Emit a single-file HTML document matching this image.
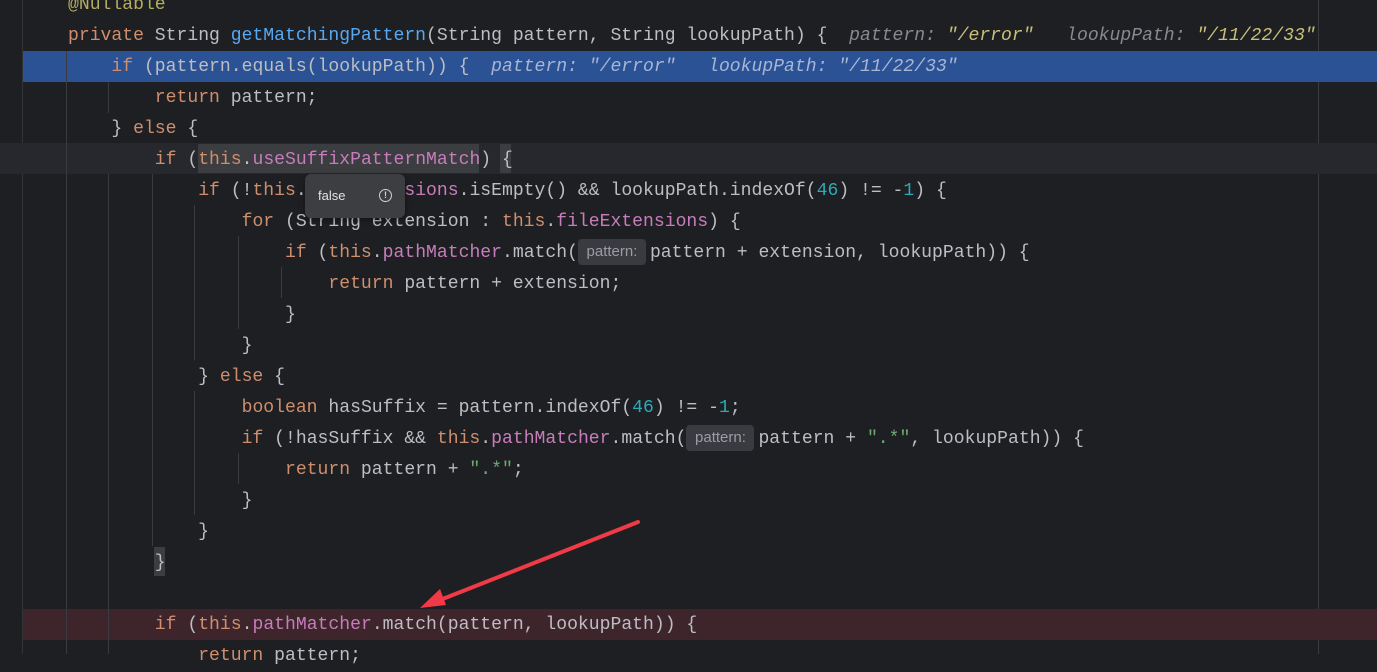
<!DOCTYPE html>
<html><head><meta charset="utf-8"><style>
body{margin:0;width:1377px;height:654px;background:#1e1f22;overflow:hidden;position:relative;font-family:"Liberation Mono",monospace;}
.ln{position:absolute;left:0;width:1377px;height:31px;}
.t{position:absolute;left:68px;top:1px;height:31px;line-height:31px;font-size:18.08px;color:#bcbec4;white-space:pre;}
.k{color:#cf8e6d}.f{color:#c77dbb}.m{color:#56a8f5}.n{color:#2aacb8}.s{color:#6aab73}.a{color:#b3ae60}
.h{color:#868a91;font-style:italic}.hs{color:#c9c07a;font-style:italic}
.ib{display:inline-block;width:68px;height:26px;line-height:26px;margin-right:4px;background:#393b40;color:#9a9da3;border-radius:4px;font-family:"Liberation Sans",sans-serif;font-size:15px;text-align:center;vertical-align:1px}
.g{position:absolute;width:1px;background:#393b40;}
</style></head><body>
<div style="position:absolute;left:22px;top:0;width:1px;height:654px;background:#313335"></div>
<div style="position:absolute;left:1318px;top:0;width:1px;height:654px;background:#393b40"></div>
<div style="position:absolute;left:0;top:143px;width:1377px;height:31px;background:#26282e"></div>
<div style="position:absolute;left:23px;top:51px;width:1354px;height:31px;background:#2b5294"></div>
<div style="position:absolute;left:23px;top:609px;width:1354px;height:31px;background:#3d252b"></div>
<div style="position:absolute;left:198px;top:144px;width:281px;height:29px;background:#3b3d40"></div>
<div style="position:absolute;left:500px;top:144px;width:11px;height:29px;background:#3b3d40"></div>
<div style="position:absolute;left:154px;top:547px;width:11px;height:29px;background:#3b3d40"></div>
<div class="g" style="left:66px;top:51px;height:603px"></div>
<div class="g" style="left:108px;top:82px;height:31px"></div>
<div class="g" style="left:108px;top:174px;height:480px"></div>
<div class="g" style="left:152px;top:174px;height:372px"></div>
<div class="g" style="left:194px;top:205px;height:155px"></div>
<div class="g" style="left:194px;top:391px;height:124px"></div>
<div class="g" style="left:238px;top:236px;height:93px"></div>
<div class="g" style="left:238px;top:453px;height:31px"></div>
<div class="g" style="left:281px;top:267px;height:31px"></div>

<div class="ln" style="top:-11px"><div class="t"><span class="a">@Nullable</span></div></div>
<div class="ln" style="top:20px"><div class="t"><span class="k">private</span> String <span class="m">getMatchingPattern</span>(String pattern, String lookupPath) {  <span class="h">pattern: </span><span class="hs">"/error"</span>   <span class="h">lookupPath: </span><span class="hs">"/11/22/33"</span></div></div>
<div class="ln" style="top:51px"><div class="t">    <span class="k">if</span> (pattern.equals(lookupPath)) {  <span class="h" style="color:#a7b6d6">pattern: "/error"   lookupPath: "/11/22/33"</span></div></div>
<div class="ln" style="top:82px"><div class="t">        <span class="k">return</span> pattern;</div></div>
<div class="ln" style="top:113px"><div class="t">    } <span class="k">else</span> {</div></div>
<div class="ln" style="top:144px"><div class="t">        <span class="k">if</span> (<span class="k">this</span>.<span class="f">useSuffixPatternMatch</span>) {</div></div>
<div class="ln" style="top:175px"><div class="t">            <span class="k">if</span> (!<span class="k">this</span>.<span class="f">fileExtensions</span>.isEmpty() &amp;&amp; lookupPath.indexOf(<span class="n">46</span>) != -<span class="n">1</span>) {</div></div>
<div class="ln" style="top:206px"><div class="t">                <span class="k">for</span> (String extension : <span class="k">this</span>.<span class="f">fileExtensions</span>) {</div></div>
<div class="ln" style="top:237px"><div class="t">                    <span class="k">if</span> (<span class="k">this</span>.<span class="f">pathMatcher</span>.match(<span class="ib">pattern:</span>pattern + extension, lookupPath)) {</div></div>
<div class="ln" style="top:268px"><div class="t">                        <span class="k">return</span> pattern + extension;</div></div>
<div class="ln" style="top:299px"><div class="t">                    }</div></div>
<div class="ln" style="top:330px"><div class="t">                }</div></div>
<div class="ln" style="top:361px"><div class="t">            } <span class="k">else</span> {</div></div>
<div class="ln" style="top:392px"><div class="t">                <span class="k">boolean</span> hasSuffix = pattern.indexOf(<span class="n">46</span>) != -<span class="n">1</span>;</div></div>
<div class="ln" style="top:423px"><div class="t">                <span class="k">if</span> (!hasSuffix &amp;&amp; <span class="k">this</span>.<span class="f">pathMatcher</span>.match(<span class="ib">pattern:</span>pattern + <span class="s">".*"</span>, lookupPath)) {</div></div>
<div class="ln" style="top:454px"><div class="t">                    <span class="k">return</span> pattern + <span class="s">".*"</span>;</div></div>
<div class="ln" style="top:485px"><div class="t">                }</div></div>
<div class="ln" style="top:516px"><div class="t">            }</div></div>
<div class="ln" style="top:547px"><div class="t">        }</div></div>
<div class="ln" style="top:609px"><div class="t">        <span class="k">if</span> (<span class="k">this</span>.<span class="f">pathMatcher</span>.match(pattern, lookupPath)) {</div></div>
<div class="ln" style="top:640px"><div class="t">            <span class="k">return</span> pattern;</div></div>

<div style="position:absolute;left:305px;top:174px;width:100px;height:44px;background:#3c3e42;border-radius:6px;box-shadow:0 2px 6px rgba(0,0,0,.4)"></div>
<div style="position:absolute;left:318px;top:188px;font-family:'Liberation Sans',sans-serif;font-size:13px;color:#dfe1e5">false</div>
<div style="position:absolute;left:379px;top:189px;width:11px;height:11px;border:1.5px solid #ced0d6;border-radius:50%;font:bold 9px/11px 'Liberation Sans',sans-serif;color:#ced0d6;text-align:center">!</div>

<svg style="position:absolute;left:0;top:0" width="1377" height="654">
<line x1="638" y1="522" x2="435" y2="602" stroke="#f03a47" stroke-width="4" stroke-linecap="round"/>
<polygon points="420,608 440,589 446,605" fill="#f03a47"/>
</svg>
</body></html>
